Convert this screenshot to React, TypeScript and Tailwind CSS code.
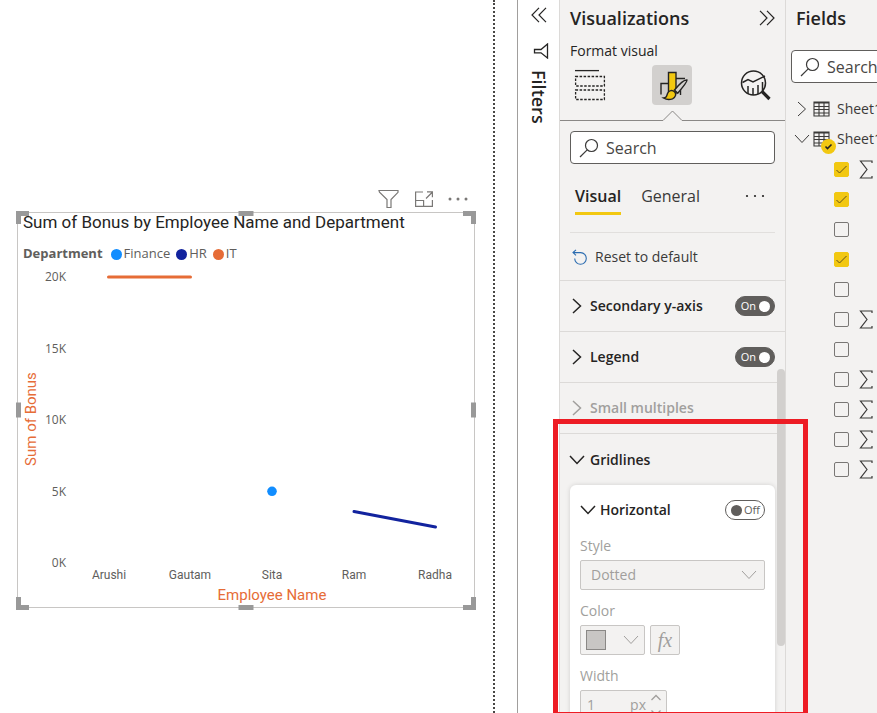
import React from "react";

const ink = "text-[#252423]";

function Chevron({ dir, className = "" }: { dir: "right" | "down"; className?: string }) {
  return dir === "right" ? (
    <svg viewBox="0 0 10 16" className={`h-4 w-[10px] shrink-0 ${className}`} fill="none" stroke="currentColor">
      <path d="M1 1l7.500 7L1 15" />
    </svg>
  ) : (
    <svg viewBox="0 0 16 10" className={`h-[10px] w-4 shrink-0 ${className}`} fill="none" stroke="currentColor">
      <path d="M1 1l7 7.500L15 1" />
    </svg>
  );
}

function DoubleChevron({ flip = false }: { flip?: boolean }) {
  return (
    <svg viewBox="0 0 16 16" className={`h-4 w-4 ${flip ? "rotate-180" : ""}`} fill="none" stroke="#252423" strokeWidth="1.2">
      <path d="M1 .8l7 7.200-7 7.200M8 .8L15 8l-7 7.200" />
    </svg>
  );
}

function Dots({ r }: { r: number }) {
  return (
    <svg viewBox="0 0 20 4" className="h-1 w-5" fill="currentColor">
      <circle cx="2" cy="2" r={r} />
      <circle cx="10" cy="2" r={r} />
      <circle cx="18" cy="2" r={r} />
    </svg>
  );
}

function SearchBox({ label, className }: { label: string; className: string }) {
  return (
    <div className={`flex items-center gap-[7px] rounded-sm border border-[#605e5c] bg-white px-2 ${className}`}>
      <svg viewBox="0 0 20 20" className="h-5 w-5 shrink-0" fill="none" stroke="#3b3a39" strokeWidth="1.2">
        <circle cx="12.5" cy="7.5" r="6" />
        <path d="M8.2 11.8L1 19" />
      </svg>
      <input
        type="search"
        aria-label={label}
        placeholder="Search"
        className="w-full min-w-0 bg-transparent text-base leading-6 outline-none placeholder:text-[#484644]"
      />
    </div>
  );
}

function Toggle({ label, on }: { label: string; on: boolean }) {
  return (
    <label
      className={`relative flex h-5 w-10 shrink-0 items-center rounded-full border text-[11px] ${
        on
          ? "justify-end gap-[3px] border-[#605e5c] bg-[#605e5c] pr-1 text-white"
          : "justify-start gap-[2px] border-[#605e5c] bg-white pl-[5px] text-[#605e5c]"
      }`}
    >
      <input type="checkbox" role="switch" aria-label={label} defaultChecked={on} className="sr-only" />
      {on && <span>On</span>}
      <span className={`h-[11px] w-[11px] rounded-full ${on ? "bg-white" : "bg-[#605e5c]"}`} />
      {!on && <span>Off</span>}
    </label>
  );
}

function Section({ label, disabled = false }: { label: string; disabled?: boolean }) {
  return (
    <div className={`flex h-[51px] items-center border-t border-[#dcdad8] pl-3 pr-[10px] ${disabled ? "text-[#a19f9d]" : ink}`}>
      <button type="button" disabled={disabled} className="flex flex-1 items-center gap-2 text-left text-sm font-semibold">
        <Chevron dir="right" className="stroke-[1.5]" />
        {label}
      </button>
      {!disabled && <Toggle label={label} on />}
    </div>
  );
}

const handle = "absolute bg-[#999]";

function Handles() {
  return (
    <div aria-hidden="true">
      <span className="absolute -left-[2px] -top-[2px] h-[13px] w-[13px] border-l-[5px] border-t-[5px] border-[#999]" />
      <span className="absolute -right-[2px] -top-[2px] h-[13px] w-[13px] border-r-[5px] border-t-[5px] border-[#999]" />
      <span className="absolute -bottom-[3px] -left-[2px] h-[13px] w-[13px] border-b-[5px] border-l-[5px] border-[#999]" />
      <span className="absolute -bottom-[3px] -right-[2px] h-[13px] w-[13px] border-b-[5px] border-r-[5px] border-[#999]" />
      <span className={`${handle} -top-[2px] left-1/2 h-[5px] w-[15px] -translate-x-1/2`} />
      <span className={`${handle} -bottom-[3px] left-1/2 h-[5px] w-[15px] -translate-x-1/2`} />
      <span className={`${handle} -left-[2px] top-1/2 h-[15px] w-[5px] -translate-y-1/2`} />
      <span className={`${handle} -right-[2px] top-1/2 h-[15px] w-[5px] -translate-y-1/2`} />
    </div>
  );
}

const legend = [
  { name: "Finance", dot: "bg-[#118dff]" },
  { name: "HR", dot: "bg-[#12239e]" },
  { name: "IT", dot: "bg-[#e66c37]" },
];
const yTicks = [
  { t: "20K", y: 276 },
  { t: "15K", y: 348 },
  { t: "10K", y: 419 },
  { t: "5K", y: 491 },
  { t: "0K", y: 562 },
];
const xTicks = [
  { t: "Arushi", x: 109 },
  { t: "Gautam", x: 190 },
  { t: "Sita", x: 272 },
  { t: "Ram", x: 354 },
  { t: "Radha", x: 435 },
];

function Visual() {
  return (
    <section>
      <div className="flex h-[26px] items-center justify-end gap-[15px] pr-[7px] text-[#7a7876]">
        <button type="button" aria-label="Filters">
          <svg viewBox="0 0 22 20" className="h-5 w-[22px]" fill="none" stroke="currentColor" strokeWidth="1.2">
            <path d="M1 1.500h19v1.800l-7 7.200v8H9v-8L1.500 3.300z" />
          </svg>
        </button>
        <button type="button" aria-label="Focus mode">
          <svg viewBox="0 0 18 16" className="h-4 w-[18px]" fill="none" stroke="currentColor" strokeWidth="1.2">
            <path d="M8 1H.6v14.400h16.800V9M.6 9.500h8v5.900M11 7.500L17 1.500M12 .8h5.400v5.500" />
          </svg>
        </button>
        <button type="button" aria-label="More options">
          <Dots r={1.5} />
        </button>
      </div>
      <div className="relative border border-[#c8c6c4] bg-white">
        <Handles />
        <h2 className="pl-[5px] font-[Roboto,sans-serif] text-[17px] leading-[18px] text-[#252423]">
          Sum of Bonus by Employee Name and Department
        </h2>
        <div className="flex h-[34px] items-center pl-[5px] pt-3 text-[13px] text-[#605e5c]">
          <span className="mr-2 font-bold">Department</span>
          <ul className="flex gap-[6px]">
            {legend.map((l) => (
              <li key={l.name} className="flex items-center gap-[2px]">
                <span className={`h-[11px] w-[11px] rounded-full ${l.dot}`} />
                {l.name}
              </li>
            ))}
          </ul>
        </div>
        <svg viewBox="18 265 456 342" className="block w-full" role="img" aria-label="Line chart of bonus by employee name">
          {yTicks.map((k) => (
            <text key={k.t} x="66" y={k.y + 5} textAnchor="end" className="fill-[#605e5c] text-[12px]">
              {k.t}
            </text>
          ))}
          {xTicks.map((k) => (
            <text key={k.t} x={k.x} y="579" textAnchor="middle" className="fill-[#605e5c] font-[Roboto,sans-serif] text-[12px]">
              {k.t}
            </text>
          ))}
          <text x="272" y="600" textAnchor="middle" className="fill-[#e66c37] font-[Roboto,sans-serif] text-[15px]">
            Employee Name
          </text>
          <text transform="translate(36 419) rotate(-90)" textAnchor="middle" className="fill-[#e66c37] font-[Roboto,sans-serif] text-[15px]">
            Sum of Bonus
          </text>
          <g fill="none" strokeWidth="3" strokeLinecap="round">
            <path d="M108.500 277H190.500" stroke="#e66c37" />
            <path d="M354 511.500L435.500 527" stroke="#12239e" />
          </g>
          <circle cx="272" cy="491.300" r="4.800" fill="#118dff" />
        </svg>
      </div>
    </section>
  );
}

function FiltersRail() {
  return (
    <aside className="flex w-[42px] shrink-0 flex-col items-center border-l border-[#a19f9d] bg-white pt-[7px]">
      <button type="button" aria-label="Expand filters">
        <DoubleChevron flip />
      </button>
      <svg viewBox="0 0 16 16" className="ml-1 mt-5 h-4 w-4" fill="none" stroke="#252423" strokeWidth="1.3">
        <path d="M14.500 1v14L8 9.800H1.500V6.500H8z" />
      </svg>
      <h2 className="mt-[11px] text-lg leading-6 font-semibold text-[#252423] [writing-mode:vertical-rl]">Filters</h2>
    </aside>
  );
}

function FormatIcons() {
  return (
    <div className="mt-1 flex justify-between pl-[14px] pr-[13px]">
      <button type="button" aria-label="Build visual" className="flex h-10 w-8 items-center justify-center">
        <svg viewBox="0 0 32 32" className="h-8 w-8" fill="none" stroke="#252423" strokeWidth="1.300">
          <path d="M1 1.600h24" />
          <path d="M1.600 7.500h28.800v9.500H1.600z M1.600 21h28.800v9.500H1.600z" strokeDasharray="2.500 1.500" />
        </svg>
      </button>
      <button type="button" aria-label="Format visual" aria-pressed="true" className="flex h-10 w-10 items-center justify-center rounded-sm bg-[#d2d0ce]">
        <svg viewBox="0 0 32 32" className="h-8 w-8" fill="none" stroke="#252423" strokeWidth="1.400">
          <path d="M5 25.500V14.500h8M20 9.500h9" />
          <path d="M12.500 3.500h7.500v21h-7.500z" fill="#f2c811" />
          <path d="M24.500 18v8" />
          <path d="M31 11c-2.500-.5-6 2-12.500 10l3.200 3.200C28 17 31.500 13 31 11z" fill="#d2d0ce" />
          <path d="M7.500 29c3-.2 3-1.500 4-4.500 1.300-3.400 5-3.800 7-1.700 2 2.200 1.200 5.600-2 7-3 1.200-6.700.6-9-.8z" fill="#f2c811" />
        </svg>
      </button>
      <button type="button" aria-label="Analytics" className="flex h-10 w-[34px] items-center justify-center">
        <svg viewBox="0 0 34 32" className="h-8 w-[34px]" fill="none" stroke="#252423" strokeWidth="1.500">
          <circle cx="15.500" cy="14" r="12" />
          <path d="M4.500 13.500l5.500-3 5 2.500 12-6M10 25v-8M15 26v-7M20 25v-9M24.500 22v-9" />
          <path d="M24 22.500l7.500 7.500" strokeWidth="3.200" />
        </svg>
      </button>
    </div>
  );
}

function GridlinesCard() {
  return (
    <div className="mx-[10px] rounded-md bg-white px-[10px] pb-6 text-sm text-[#a19f9d] shadow-[0_0_5px_rgba(0,0,0,0.14)]">
      <div className="flex h-[50px] items-center justify-between">
        <button type="button" aria-expanded="true" className={`flex items-center gap-1 font-semibold ${ink}`}>
          <Chevron dir="down" className="stroke-[1.500]" />
          Horizontal
        </button>
        <Toggle label="Horizontal gridlines" on={false} />
      </div>
      <label htmlFor="style" className="block h-[25px] leading-[22px]">
        Style
      </label>
      <div className="relative">
        <select id="style" disabled className="h-[30px] w-full appearance-none rounded-xs border border-[#c8c6c4] bg-[#f3f2f1] pl-[10px] text-[#a19f9d] opacity-100">
          <option>Dotted</option>
        </select>
        <Chevron dir="down" className="pointer-events-none absolute right-2 top-[10px]" />
      </div>
      <div className="flex h-[35px] items-center pt-[7px]">Color</div>
      <div className="flex gap-[5px]">
        <button type="button" disabled aria-label="Color" className="flex h-[30px] w-[65px] items-center justify-between rounded-xs border border-[#c8c6c4] bg-[#f3f2f1] px-[5px]">
          <span className="h-5 w-5 border border-[#8a8886] bg-[#c8c6c4]" />
          <Chevron dir="down" />
        </button>
        <button type="button" disabled className="h-[30px] w-[30px] rounded-xs border border-[#c8c6c4] bg-[#f3f2f1] font-['Liberation_Serif',serif] text-xl leading-6 italic">
          fx
        </button>
      </div>
      <label htmlFor="width" className="flex h-[35px] items-center pt-[7px]">
        Width
      </label>
      <div className="flex h-[30px] w-[87px] items-center rounded-xs border border-[#c8c6c4] bg-[#f3f2f1] pr-1 pl-[6px]">
        <input id="width" disabled defaultValue="1" className="w-full min-w-0 bg-transparent" />
        <span className="mr-1">px</span>
        <svg viewBox="0 0 12 22" className="h-[22px] w-3 shrink-0" fill="none" stroke="currentColor" strokeWidth="1.300">
          <path d="M1.500 6L6 1.500 10.500 6M1.500 16.500L6 21l4.500-4.500" />
        </svg>
      </div>
    </div>
  );
}

function VisualizationsPane() {
  return (
    <aside className="relative w-[227px] shrink-0 border-x border-[#dcdad8] bg-[#f3f2f1]">
      <div className="flex h-9 items-center justify-between pl-[10px] pr-[10px]">
        <h2 className="text-[18px] font-semibold text-[#252423]">Visualizations</h2>
        <button type="button" aria-label="Collapse visualizations">
          <DoubleChevron />
        </button>
      </div>
      <h3 className="mt-[5px] pl-[10px] text-sm leading-5 font-medium text-[#252423]">Format visual</h3>
      <FormatIcons />
      <svg viewBox="0 0 225 12" className="mt-[5px] block w-full" fill="none" stroke="#8a8886">
        <path d="M0 10.500H103L112.500 1L122 10.500H225" />
      </svg>
      <SearchBox label="Search visualizations" className="mx-[10px] mt-[9px] h-[33px]" />
      <div className="mx-[10px] mt-4 flex h-[53px] items-start border-b border-[#e1dfdd] pl-[5px] text-base">
        <button type="button" className="flex h-[35px] items-center border-b-[3px] border-[#f2c811] font-semibold text-[#252423]">
          Visual
        </button>
        <button type="button" className="ml-5 flex h-8 items-center text-[#3b3a39]">
          General
        </button>
        <button type="button" aria-label="More options" className="ml-auto flex h-8 items-center pr-[10px] text-[#252423]">
          <Dots r={1.1} />
        </button>
      </div>
      <button type="button" className="flex h-[47px] items-center gap-[7px] pl-3 text-sm text-[#3b3a39]">
        <svg viewBox="0 0 16 16" className="h-4 w-4" fill="none" stroke="#2b6cb0" strokeWidth="1.100">
          <path d="M4 .8L1 3.600l3 2.800M1.200 3.600h7.500a5.800 5.800 0 1 1-6 5.900" />
        </svg>
        Reset to default
      </button>
      <Section label="Secondary y-axis" />
      <Section label="Legend" />
      <Section label="Small multiples" disabled />
      <div className="flex h-[52px] items-center border-t border-[#dcdad8] pl-[9px]">
        <button type="button" aria-expanded="true" className="flex items-center gap-[5px] text-sm font-semibold text-[#252423]">
          <Chevron dir="down" className="stroke-[1.500]" />
          Gridlines
        </button>
      </div>
      <GridlinesCard />
      <span aria-hidden="true" className="absolute right-0 top-[369px] h-[277px] w-2 rounded-full bg-[#d2d0ce]" />
      <span aria-hidden="true" className="absolute -left-[7px] top-[419px] z-10 h-[298px] w-[255px] border-[5px] border-[#ed1c24]" />
    </aside>
  );
}

function TableIcon({ marked = false }: { marked?: boolean }) {
  return (
    <span className="relative shrink-0">
      <svg viewBox="0 0 17 16" className="h-4 w-[17px]" fill="none" stroke="#3b3a39" strokeWidth="1.100">
        <path d="M1 1h15v14H1zM1 2h15M1 5.500h15M1 8.500h15M1 12h15M6 2v13M11 2v13" />
      </svg>
      {marked && (
        <svg viewBox="0 0 15 15" className="absolute left-2 top-2 h-[15px] w-[15px]">
          <circle cx="7.500" cy="7.500" r="7.500" fill="#f2c811" />
          <path d="M4.500 7.500l2 2 4-4" fill="none" stroke="#252423" strokeWidth="1.600" />
        </svg>
      )}
    </span>
  );
}

const fields = [
  { checked: true, sum: true },
  { checked: true, sum: false },
  { checked: false, sum: false },
  { checked: true, sum: false },
  { checked: false, sum: false },
  { checked: false, sum: true },
  { checked: false, sum: false },
  { checked: false, sum: true },
  { checked: false, sum: true },
  { checked: false, sum: true },
  { checked: false, sum: true },
];

function FieldsPane() {
  return (
    <aside className="w-[91px] shrink-0 overflow-hidden bg-[#f3f2f1]">
      <h2 className="flex h-9 items-center pl-[10px] text-[18px] font-semibold text-[#252423]">Fields</h2>
      <SearchBox label="Search fields" className="mt-[14px] ml-[5px] h-[33px] w-[200px]" />
      <div className="mt-[11px] text-sm text-[#3b3a39]">
        <button type="button" className="flex h-[30px] items-center whitespace-nowrap pl-[11px]">
          <Chevron dir="right" className="mr-[6px]" />
          <TableIcon />
          <span className="ml-[7px]">Sheet1</span>
        </button>
        <button type="button" aria-expanded="true" className="flex h-[30px] items-center whitespace-nowrap pl-2">
          <Chevron dir="down" className="mr-[3px]" />
          <TableIcon marked />
          <span className="ml-[7px]">Sheet1</span>
        </button>
      </div>
      <ul>
        {fields.map((f, i) => (
          <li key={i} className="flex h-[30px] items-center gap-[10px] pl-12">
            <span className="relative h-[15px] w-[15px] shrink-0">
              <input
                type="checkbox"
                aria-label={`Field ${i + 1}`}
                defaultChecked={f.checked}
                className="block h-[15px] w-[15px] appearance-none rounded-xs border border-[#797775] checked:border-[#f2c811] checked:bg-[#f2c811]"
              />
              {f.checked && (
                <svg viewBox="0 0 15 15" className="pointer-events-none absolute inset-0" fill="none" stroke="#605020">
                  <path d="M2.500 8l3 3 7-7" />
                </svg>
              )}
            </span>
            {f.sum && (
              <svg viewBox="0 0 14 19" className="h-[19px] w-[14px] shrink-0" fill="none" stroke="#3b3a39" strokeWidth="1.200">
                <path d="M13 3V1H1.500l6.500 8.500L1.500 18H13v-2" />
              </svg>
            )}
          </li>
        ))}
      </ul>
    </aside>
  );
}

export default function App() {
  return (
    <div className="flex h-screen overflow-hidden bg-white font-['Open_Sans','Noto_Sans',sans-serif]">
      <main className="flex min-w-0 flex-1">
        <div className="mr-[22px] flex-1 border-r-2 border-dotted border-[#484644] pt-[186px] pr-[18px] pl-[17px]">
          <Visual />
        </div>
      </main>
      <FiltersRail />
      <VisualizationsPane />
      <FieldsPane />
    </div>
  );
}
